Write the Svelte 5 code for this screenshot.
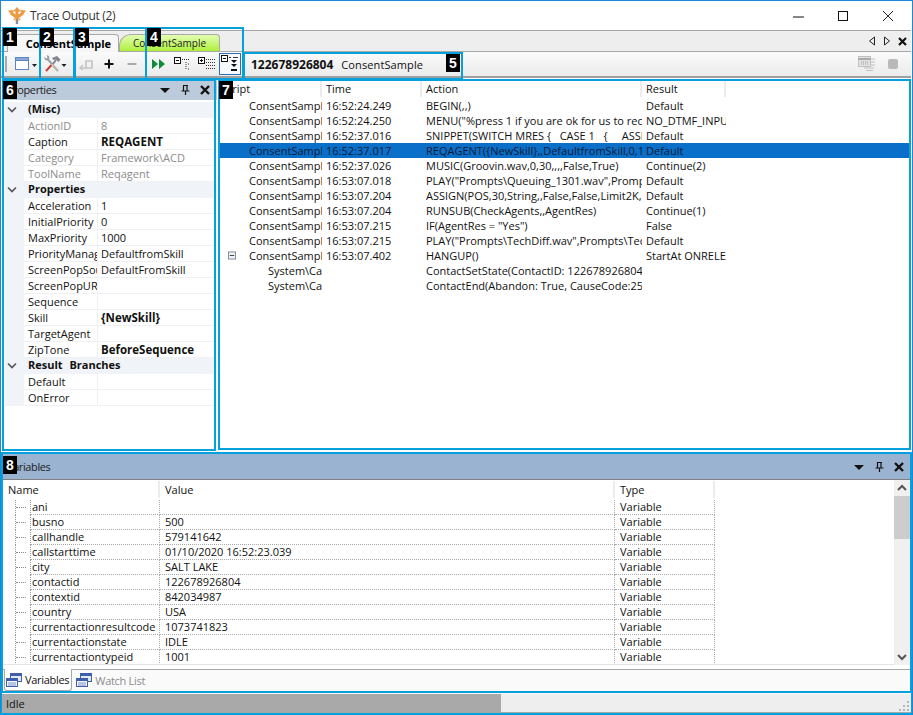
<script>
    const miscRows = [
        { name: "ActionID", value: "8", off: true },
        { name: "Caption", value: "REQAGENT", bold: true },
        { name: "Category", value: "Framework\\ACD", off: true },
        { name: "ToolName", value: "Reqagent", off: true }
    ];
    const propRows = [
        { name: "Acceleration", value: "1" },
        { name: "InitialPriority", value: "0" },
        { name: "MaxPriority", value: "1000" },
        { name: "PriorityManagement", value: "DefaultfromSkill" },
        { name: "ScreenPopSource", value: "DefaultFromSkill" },
        { name: "ScreenPopURL", value: "" },
        { name: "Sequence", value: "" },
        { name: "Skill", value: "{NewSkill}", bold: true },
        { name: "TargetAgent", value: "" },
        { name: "ZipTone", value: "BeforeSequence", bold: true }
    ];
    const branchRows = [
        { name: "Default", value: "" },
        { name: "OnError", value: "" }
    ];
    const groups = [
        { title: "(Misc)", rows: miscRows },
        { title: "Properties", rows: propRows },
        { title: "Result Branches", rows: branchRows }
    ];

    const trace = [
        ["ConsentSample", "16:52:24.249", "BEGIN(,,)", "Default"],
        ["ConsentSample", "16:52:24.250", "MENU(\"%press 1 if you are ok for us to record this call\")", "NO_DTMF_INPUT"],
        ["ConsentSample", "16:52:37.016", "SNIPPET(SWITCH MRES {   CASE 1   {     ASSIGN", "Default"],
        ["ConsentSample", "16:52:37.017", "REQAGENT({NewSkill},,DefaultfromSkill,0,1000,1)", "Default"],
        ["ConsentSample", "16:52:37.026", "MUSIC(Groovin.wav,0,30,,,,False,True)", "Continue(2)"],
        ["ConsentSample", "16:53:07.018", "PLAY(\"Prompts\\Queuing_1301.wav\",Prompts\\Queuing", "Default"],
        ["ConsentSample", "16:53:07.204", "ASSIGN(POS,30,String,,False,False,Limit2K,Limit", "Default"],
        ["ConsentSample", "16:53:07.204", "RUNSUB(CheckAgents,,AgentRes)", "Continue(1)"],
        ["ConsentSample", "16:53:07.215", "IF(AgentRes = \"Yes\")", "False"],
        ["ConsentSample", "16:53:07.215", "PLAY(\"Prompts\\TechDiff.wav\",Prompts\\TechDiff", "Default"],
        ["ConsentSample", "16:53:07.402", "HANGUP()", "StartAt ONRELEASE"],
        ["System\\Call", "", "ContactSetState(ContactID: 122678926804, State", ""],
        ["System\\Call", "", "ContactEnd(Abandon: True, CauseCode:25", ""]
    ];

    const variables = [
        ["ani", ""],
        ["busno", "500"],
        ["callhandle", "579141642"],
        ["callstarttime", "01/10/2020 16:52:23.039"],
        ["city", "SALT LAKE"],
        ["contactid", "122678926804"],
        ["contextid", "842034987"],
        ["country", "USA"],
        ["currentactionresultcode", "1073741823"],
        ["currentactionstate", "IDLE"],
        ["currentactiontypeid", "1001"]
    ];

    const boxes = ["b-tabs", "b-two", "b-three", "b-five", "b-six", "b-seven", "b-eight", "b-status"];
    const badges = [
        { n: 1, cls: "n1" }, { n: 2, cls: "n2" }, { n: 3, cls: "n3" }, { n: 4, cls: "n4" },
        { n: 5, cls: "n5" }, { n: 6, cls: "n6" }, { n: 7, cls: "n7" }, { n: 8, cls: "n8" }
    ];
</script>

{#snippet paneButtons()}
    <div class="pane-buttons">
        <svg width="12" height="12" viewBox="0 0 12 12"><path d="M1 4h10L6 9z" fill="#111"/></svg>
        <svg width="12" height="12" viewBox="0 0 12 12"><path d="M4 1.500h5M4.500 1.500v5M8 1.500v5M2.500 7h8M6.500 7v4" stroke="#111" stroke-width="1.200" fill="none"/></svg>
        <svg width="12" height="12" viewBox="0 0 12 12"><path d="M2 2l8 8M10 2l-8 8" stroke="#111" stroke-width="2.400"/></svg>
    </div>
{/snippet}

{#snippet varIcon()}
    <svg width="17" height="16" viewBox="0 0 17 16">
        <rect x="5.500" y="1.500" width="11" height="8" fill="#dfe9f7" stroke="#3f5fa8"/>
        <rect x="5.500" y="1.500" width="11" height="2.500" fill="#3f5fa8"/>
        <rect x="1.500" y="6.500" width="11" height="8" fill="#f4f7fc" stroke="#3f5fa8"/>
        <rect x="1.500" y="6.500" width="11" height="2.500" fill="#3f5fa8"/>
        <path d="M3 11h8M3 13h8" stroke="#7d93c4"/>
    </svg>
{/snippet}

<div class="window">
    <header class="titlebar">
        <svg class="logo" width="18" height="18" viewBox="0 0 18 18">
            <path d="M9 9v8" stroke="#8a9099" stroke-width="2.400"/>
            <path d="M9 3v7M3 6l6 4.500L15 6" fill="none" stroke="#ee9a42" stroke-width="3"/>
            <path d="M9 0l4 4.500H5zM0 3.500l5.800-.5-2 5.400zM18 3.500l-5.800-.5 2 5.400zM5 12l2.500-1v3zM13 12l-2.500-1v3z" fill="#ee9a42"/>
        </svg>
        <span class="title">Trace Output (2)</span>
        <div class="win-buttons">
            <svg width="14" height="14" viewBox="0 0 14 14"><path d="M2 8h11" stroke="#111"/></svg>
            <svg width="14" height="14" viewBox="0 0 14 14"><rect x="2.500" y="2.500" width="9" height="9" fill="none" stroke="#111"/></svg>
            <svg width="14" height="14" viewBox="0 0 14 14"><path d="M2 2l10 10M12 2L2 12" stroke="#222"/></svg>
        </div>
    </header>

    <div class="tabstrip">
        <div class="tab active">ConsentSample</div>
        <div class="tab green">ConsentSample</div>
        <div class="strip-nav">
            <svg width="8" height="10" viewBox="0 0 8 10"><path d="M6.500 1v8L1.500 5z" fill="none" stroke="#222"/></svg>
            <svg width="8" height="10" viewBox="0 0 8 10"><path d="M1.500 1v8l5-4z" fill="none" stroke="#222"/></svg>
            <svg width="9" height="9" viewBox="0 0 9 9"><path d="M1 1l7 7M8 1L1 8" stroke="#111" stroke-width="2.200"/></svg>
        </div>
    </div>

    <div class="toolbar">
        <div class="grip"></div>
        <div class="tool wide">
            <svg width="24" height="18" viewBox="0 0 24 18">
                <rect x="1.500" y="2.500" width="13" height="12" fill="#fff" stroke="#5b86c0"/>
                <rect x="1.500" y="2.500" width="13" height="3" fill="#86a9d8" stroke="#5b86c0"/>
                <path d="M18 9h5l-2.500 3z" fill="#222"/>
            </svg>
        </div>
        <div class="tool wide">
            <svg width="24" height="18" viewBox="0 0 24 18">
                <path d="M9 9L4 3.500" stroke="#9aa0a6" stroke-width="2"/>
                <path d="M1 1.500l2 2 1.500-1-1-2.500 2.500 1 .5 3-2 1.500-2.500-.5z" fill="#9aa0a6"/>
                <path d="M9.500 9.500L13 5" stroke="#7f858c" stroke-width="2"/>
                <path d="M9 3l5-2 3.500 3.500-2 2.500-2.500-2.500-2.500.5z" fill="#7f858c"/>
                <path d="M3 16l5.500-6" stroke="#c8402f" stroke-width="2"/>
                <path d="M15 16l-5-5.500" stroke="#b8b2a8" stroke-width="2.200"/>
                <path d="M18.500 9h5l-2.500 3z" fill="#222"/>
            </svg>
        </div>
        <div class="tool undo">
            <svg width="16" height="14" viewBox="0 0 16 14"><path d="M2 11h6V4h6v7H8" fill="none" stroke="#c4c4c4" stroke-width="1.600"/><path d="M5 8l-3 3 3 2" fill="none" stroke="#c4c4c4" stroke-width="1.400"/></svg>
        </div>
        <div class="tool"><svg width="12" height="12" viewBox="0 0 12 12"><path d="M6 1.500v9M1.500 6h9" stroke="#111" stroke-width="2"/></svg></div>
        <div class="tool minus"><svg width="12" height="12" viewBox="0 0 12 12"><path d="M1.500 6h9" stroke="#aaa" stroke-width="2"/></svg></div>
        <div class="tool play">
            <svg width="14" height="12" viewBox="0 0 14 12"><path d="M0 1l6 5-6 5zM7 1l6 5-6 5z" fill="#0f8a3c"/></svg>
        </div>
        <div class="tool">
            <svg width="18" height="14" viewBox="0 0 18 14"><rect x=".5" y=".5" width="6" height="6" fill="#fff" stroke="#111"/><path d="M2 3.500h3" stroke="#111"/><path d="M8 2.500h8M12 5v8M14 7h2M14 12h2" stroke="#333" stroke-dasharray="1 1"/></svg>
        </div>
        <div class="tool">
            <svg width="18" height="14" viewBox="0 0 18 14"><rect x=".5" y=".5" width="6" height="6" fill="#fff" stroke="#111"/><path d="M2 3.500h3M3.500 2v3" stroke="#111"/><path d="M8 2.500h9M8 5.500h9M8 8.500h9M8 11.500h9" stroke="#333" stroke-dasharray="1 1"/></svg>
        </div>
        <div class="tool selected">
            <svg width="18" height="18" viewBox="0 0 18 18"><rect x=".5" y=".5" width="6" height="6" fill="#fff" stroke="#111"/><path d="M2 3.500h3" stroke="#111"/><path d="M8 2.500h2M12 2.500h5" stroke="#333"/><path d="M10 5h6l-3 3zM10 9h6l-3 3z" fill="#111"/><path d="M10 15h6" stroke="#111" stroke-width="2"/></svg>
        </div>
        <div class="contact"><b>122678926804</b><span>ConsentSample</span></div>
        <div class="tool-right">
            <svg width="18" height="16" viewBox="0 0 18 16"><rect x=".5" y=".5" width="12" height="10" fill="#e3e3e3" stroke="#c0c0c0"/><path d="M.5 3h12" stroke="#aaa" stroke-width="2"/><path d="M3 6h7M3 8h7" stroke="#999" stroke-dasharray="1 1"/><path d="M13 3h4M13 6h4M13 9h4M6 12h10M8 14.500h7" stroke="#c0c0c0"/></svg>
            <div class="stop"></div>
        </div>
    </div>

    <div class="middle">
        <section class="props">
            <div class="pane-head light">
                <span class="pane-title">Properties</span>
                {@render paneButtons()}
            </div>
            <div class="grid-body">
                {#each groups as g}
                    <div class="group-row">
                        <span class="chev"><svg width="10" height="8" viewBox="0 0 10 8"><path d="M1 1.500l4 4 4-4" fill="none" stroke="#555" stroke-width="1.600"/></svg></span>
                        <b>{g.title}</b>
                    </div>
                    {#each g.rows as r}
                        <div class="prop-row" class:off={r.off}>
                            <span class="gutter"></span>
                            <span class="pname">{r.name}</span>
                            <span class="pvalue" class:bold={r.bold}>{r.value}</span>
                        </div>
                    {/each}
                {/each}
            </div>
        </section>

        <section class="trace">
            <div class="trace-head">
                <span class="c-script head-script">Script</span>
                <span class="c-time">Time</span>
                <span class="c-action">Action</span>
                <span class="c-result">Result</span>
            </div>
            {#each trace as row, i}
                <div class="trace-row" class:sel={i === 3} class:child={i > 10}>
                    <span class="expander">
                        {#if i === 10}
                            <svg width="9" height="9" viewBox="0 0 9 9"><rect x=".5" y=".5" width="8" height="8" fill="#eef0f3" stroke="#7a8494"/><path d="M2 4.500h5" stroke="#333"/></svg>
                        {/if}
                    </span>
                    <span class="c-script cell">{row[0]}</span>
                    <span class="c-time cell">{row[1]}</span>
                    <span class="c-action cell">{row[2]}</span>
                    <span class="c-result cell">{row[3]}</span>
                </div>
            {/each}
        </section>
    </div>

    <section class="vars">
        <div class="pane-head dark">
            <span class="pane-title">Variables</span>
            {@render paneButtons()}
        </div>
        <div class="vars-body">
            <div class="vars-table">
                <div class="vars-head">
                    <span class="v-name">Name</span>
                    <span class="v-value">Value</span>
                    <span class="v-type">Type</span>
                </div>
                {#each variables as v}
                    <div class="vars-row">
                        <span class="v-tree"><i></i></span>
                        <span class="v-key">{v[0]}</span>
                        <span class="v-val">{v[1]}</span>
                        <span class="v-typ">Variable</span>
                    </div>
                {/each}
            </div>
            <div class="scrollbar">
                <svg width="16" height="16" viewBox="0 0 16 16"><path d="M4 10l4-4 4 4" fill="none" stroke="#555" stroke-width="2"/></svg>
                <div class="thumb"></div>
                <div class="track"></div>
                <svg width="16" height="16" viewBox="0 0 16 16"><path d="M4 6l4 4 4-4" fill="none" stroke="#555" stroke-width="2"/></svg>
            </div>
        </div>
        <div class="vars-tabs">
            <div class="vtab on">{@render varIcon()}<span>Variables</span></div>
            <div class="vtab">{@render varIcon()}<span>Watch List</span></div>
        </div>
    </section>

    <footer class="status">
        <div class="progress">Idle</div>
        <svg class="sizer" width="12" height="12" viewBox="0 0 12 12"><path d="M9 1h2v2H9zM5 5h2v2H5zM9 5h2v2H9zM1 9h2v2H1zM5 9h2v2H5zM9 9h2v2H9z" fill="#b5b5b5"/></svg>
    </footer>

    {#each boxes as b}
        <div class="mark {b}"></div>
    {/each}
    {#each badges as b}
        <div class="badge {b.cls}">{b.n}</div>
    {/each}
</div>

<style>
    :global(body) {
        margin: 0;
        background: #fff;
    }

    .window {
        position: relative;
        width: 913px;
        height: 715px;
        box-sizing: border-box;
        overflow: hidden;
        display: flex;
        flex-direction: column;
        font-family: "Open Sans", "Noto Sans", sans-serif;
        font-size: 11px;
        color: #111;
        background: #fff;
        border: 1px solid #1a8ad4;
        border-bottom: 0;
    }

    .titlebar {
        flex: 0 0 29px;
        display: flex;
        align-items: center;
        padding-left: 7px;
        background: #fff;
    }

    .logo {
        margin-right: 4px;
    }

    .title {
        font-size: 12px;
        color: #333;
        letter-spacing: -.35px;
    }

    .win-buttons {
        margin-left: auto;
        display: flex;
        gap: 31px;
        padding-right: 17px;
    }

    .tabstrip {
        flex: 0 0 22px;
        display: flex;
        align-items: flex-end;
        padding-left: 6px;
        background: #eeeeee;
        border-top: 1px solid #a8a8a8;
        border-bottom: 1px solid #a8a8a8;
        margin-right: 1px;
        box-sizing: border-box;
        position: relative;
    }

    .tab {
        height: 18px;
        box-sizing: border-box;
        border: 1px solid #a8a8a8;
        border-bottom: 0;
        border-radius: 12px 4px 0 0;
        display: flex;
        align-items: center;
        justify-content: flex-end;
        font-size: 11px;
        margin-bottom: -1px;
    }

    .tab.active {
        width: 112px;
        padding-right: 7px;
        background: #f7f7f7;
        font-weight: 700;
        color: #000;
        position: relative;
    }

    .tab.green {
        width: 101px;
        justify-content: center;
        background: linear-gradient(#e4fdb4, #aef03c);
        color: #222;
        margin-bottom: 0;
        height: 17px;
        border-bottom: 0;
        font-size: 10px;
    }

    .strip-nav {
        position: absolute;
        right: 4px;
        top: 5px;
        display: flex;
        align-items: center;
        gap: 7px;
    }

    .toolbar {
        flex: 0 0 26px;
        box-sizing: border-box;
        display: flex;
        align-items: center;
        background: linear-gradient(#fafafa, #ebebeb);
        border-bottom: 2px solid #a0a0a0;
        padding-left: 4px;
        margin-right: 1px;
    }

    .grip {
        width: 2px;
        height: 16px;
        margin-right: 4px;
        background-image: radial-gradient(#aaa 1px, transparent 1px);
        background-size: 2px 4px;
    }

    .tool {
        width: 24px;
        height: 22px;
        display: flex;
        align-items: center;
        justify-content: center;
        flex: none;
    }

    .tool.wide {
        width: 29px;
    }

    .tool.undo {
        width: 23px;
        margin-left: 5px;
    }

    .tool.minus {
        width: 22px;
    }

    .tool.play {
        margin-left: 4px;
    }

    .tool.selected {
        width: 22px;
        box-sizing: border-box;
        border: 1px solid #2f6fb5;
        background: #f6f9fd;
    }

    .contact {
        margin-left: 10px;
        display: flex;
        align-items: baseline;
        gap: 8px;
    }

    .contact b {
        font-weight: 700;
        font-size: 12px;
    }

    .contact span {
        letter-spacing: .1px;
    }

    .tool-right {
        margin-left: auto;
        display: flex;
        align-items: center;
        gap: 12px;
        padding-right: 13px;
    }

    .stop {
        width: 10px;
        height: 10px;
        background: #b9b9b9;
        border-radius: 2px;
    }

    .middle {
        height: 375px;
        flex: none;
        display: flex;
        gap: 2px;
        padding: 1px 1px 0 2px;
        box-sizing: border-box;
    }

    .props {
        width: 214px;
        flex: none;
        display: flex;
        flex-direction: column;
    }

    .pane-head {
        display: flex;
        align-items: center;
        justify-content: space-between;
        padding-left: 4px;
        padding-right: 6px;
        box-sizing: border-box;
    }

    .pane-head.light {
        height: 21px;
        background: #bccbdc;
    }

    .pane-head.dark {
        height: 26px;
        background: #9ab3d0;
        border-bottom: 1px solid #808080;
    }

    .pane-title {
        color: #222;
        letter-spacing: -.4px;
    }

    .pane-buttons {
        display: flex;
        gap: 8px;
    }

    .grid-body {
        flex: 1;
        background: #fff;
        padding: 2px 0 0 2px;
    }

    .group-row {
        height: 16px;
        line-height: 14px;
        display: flex;
        align-items: center;
        background: #f0f3f8;
        font-size: 11px;
        word-spacing: 4px;
    }

    .group-row b {
        margin-top: -2px;
    }

    .chev {
        width: 23px;
        padding-left: 2px;
        box-sizing: border-box;
        display: flex;
    }

    .prop-row {
        height: 16px;
        box-sizing: border-box;
        display: flex;
        align-items: center;
        border-bottom: 1px solid #eef0f3;
    }

    .gutter {
        width: 19px;
        height: 16px;
        background: #f0f3f8;
        flex: none;
    }

    .pname {
        width: 69px;
        padding-left: 4px;
        overflow: hidden;
        white-space: nowrap;
        flex: none;
    }

    .pvalue {
        border-left: 1px solid #eef0f3;
        padding-left: 3px;
        height: 15px;
        line-height: 15px;
        flex: 1;
    }

    .pvalue.bold {
        font-weight: 700;
        font-size: 11.5px;
    }

    .off .pname,
    .off .pvalue {
        color: #8c8c8c;
    }

    .trace {
        flex: 1;
        min-width: 0;
        overflow: hidden;
        background: #fff;
    }

    .trace-head {
        height: 19px;
        display: flex;
        align-items: flex-start;
        padding-top: 1px;
        box-sizing: border-box;
    }

    .trace-head span {
        height: 17px;
        line-height: 17px;
        box-sizing: border-box;
        border-right: 2px solid #ececec;
    }

    .trace-head .head-script {
        width: 103px;
        padding-left: 2px;
    }

    .c-script {
        width: 86px;
        flex: none;
    }

    .c-time {
        width: 100px;
        flex: none;
        padding-left: 4px;
        box-sizing: border-box;
    }

    .c-action {
        width: 220px;
        flex: none;
        padding-left: 4px;
        box-sizing: border-box;
    }

    .c-result {
        width: 84px;
        flex: none;
        padding-left: 4px;
        box-sizing: border-box;
    }

    .trace-row {
        height: 15px;
        display: flex;
        align-items: center;
    }

    .trace-row.sel {
        background: #0a6fc8;
        color: #0b1a33;
    }

    .expander {
        width: 17px;
        padding-left: 9px;
        box-sizing: border-box;
        flex: none;
        height: 15px;
        display: flex;
        align-items: center;
    }

    .cell {
        white-space: pre;
        overflow: hidden;
        height: 15px;
        line-height: 15px;
    }

    .trace-row .c-script {
        padding-left: 13px;
        box-sizing: border-box;
    }

    .trace-row.child .c-script {
        padding-left: 32px;
    }

    .vars {
        margin: 1px 1px 0 2px;
        flex: none;
        height: 240px;
        display: flex;
        flex-direction: column;
    }

    .vars-body {
        flex: 1;
        min-height: 0;
        display: flex;
        background: #fff;
        margin-bottom: 4px;
    }

    .vars-table {
        flex: 1;
        min-width: 0;
        overflow: hidden;
        border-bottom: 1px solid #e4e4e4;
    }

    .vars-head {
        height: 20px;
        display: flex;
        align-items: flex-start;
        padding-top: 1px;
        box-sizing: border-box;
    }

    .vars-head span {
        height: 17px;
        line-height: 17px;
        box-sizing: border-box;
        border-right: 2px solid #ececec;
    }

    .v-name {
        width: 157px;
        padding-left: 5px;
    }

    .v-value {
        width: 455px;
        padding-left: 5px;
    }

    .v-type {
        width: 100px;
        padding-left: 5px;
    }

    .vars-row {
        height: 15px;
        display: flex;
        align-items: center;
        box-sizing: border-box;
    }

    .vars-row span {
        height: 15px;
        line-height: 14px;
        box-sizing: border-box;
        white-space: nowrap;
    }

    .v-tree {
        flex: none;
        border-left: 1px dotted #999;
        margin-left: 12px;
        width: 16px;
        display: flex;
        align-items: center;
        border-right: 1px dotted #999;
    }

    .v-tree i {
        width: 10px;
        border-top: 1px dotted #888;
    }

    .v-key {
        width: 129px;
        flex: none;
        padding-left: 1px;
        border-bottom: 1px dotted #aaa;
        border-right: 1px dotted #aaa;
    }

    .v-val {
        width: 455px;
        flex: none;
        padding-left: 5px;
        border-bottom: 1px dotted #aaa;
        border-right: 1px dotted #aaa;
    }

    .v-typ {
        width: 100px;
        flex: none;
        padding-left: 5px;
        border-bottom: 1px dotted #aaa;
        border-right: 1px dotted #aaa;
    }

    .scrollbar {
        width: 17px;
        flex: none;
        display: flex;
        flex-direction: column;
        background: #f0f0f0;
    }

    .thumb {
        height: 43px;
        background: #cdcdcd;
    }

    .track {
        flex: 1;
    }

    .vars-tabs {
        height: 25px;
        flex: none;
        display: flex;
        align-items: flex-start;
        background: #fafafa;
        border-top: 1px solid #a8a8a8;
        padding-left: 1px;
        box-sizing: border-box;
    }

    .vtab {
        height: 20px;
        display: flex;
        align-items: center;
        gap: 3px;
        padding: 0 5px 0 3px;
        color: #8a8a8a;
        font-size: 11px;
        letter-spacing: -.3px;
    }

    .vtab.on {
        color: #111;
        background: #fff;
        border: 1px solid #a8a8a8;
        border-top: 0;
        margin-top: -1px;
        height: 21px;
        padding: 0 2px 0 0;
        border-radius: 0 0 3px 3px;
    }

    .status {
        height: 19px;
        flex: none;
        display: flex;
        background: #eeeeee;
        position: relative;
        margin-left: 1px;
        margin-right: 1px;
        border-bottom: 1px solid #a8a8a8;
        box-sizing: border-box;
    }

    .progress {
        width: 499px;
        background: #a9a9a9;
        line-height: 20px;
        padding-left: 4px;
        box-sizing: border-box;
    }

    .sizer {
        position: absolute;
        right: 1px;
        bottom: 0;
    }

    .mark {
        position: absolute;
        box-sizing: border-box;
        border: 2px solid #06a0dc;
        pointer-events: none;
    }

    .b-tabs { left: 1px; top: 26px; width: 242px; height: 53px; }
    .b-two { left: 38px; top: 26px; width: 36px; height: 53px; }
    .b-three { left: 73px; top: 26px; width: 73px; height: 53px; }
    .b-five { left: 242px; top: 51px; width: 220px; height: 28px; }
    .b-six { left: 1px; top: 78px; width: 214px; height: 372px; }
    .b-seven { left: 217px; top: 78px; width: 693px; height: 371px; }
    .b-eight { left: 0; top: 451px; width: 911px; height: 241px; }
    .b-status { left: -1px; top: 690px; width: 913px; height: 24px; }

    .badge {
        position: absolute;
        width: 14px;
        height: 18px;
        background: #000;
        color: #fff;
        font-family: "Liberation Sans", sans-serif;
        font-weight: 700;
        font-size: 14px;
        line-height: 18px;
        text-align: center;
    }

    .n1 { left: 2px; top: 27px; }
    .n2 { left: 39px; top: 27px; }
    .n3 { left: 74px; top: 27px; }
    .n4 { left: 146px; top: 27px; }
    .n5 { left: 445px; top: 53px; }
    .n6 { left: 2px; top: 80px; }
    .n7 { left: 218px; top: 80px; }
    .n8 { left: 2px; top: 455px; }
</style>
